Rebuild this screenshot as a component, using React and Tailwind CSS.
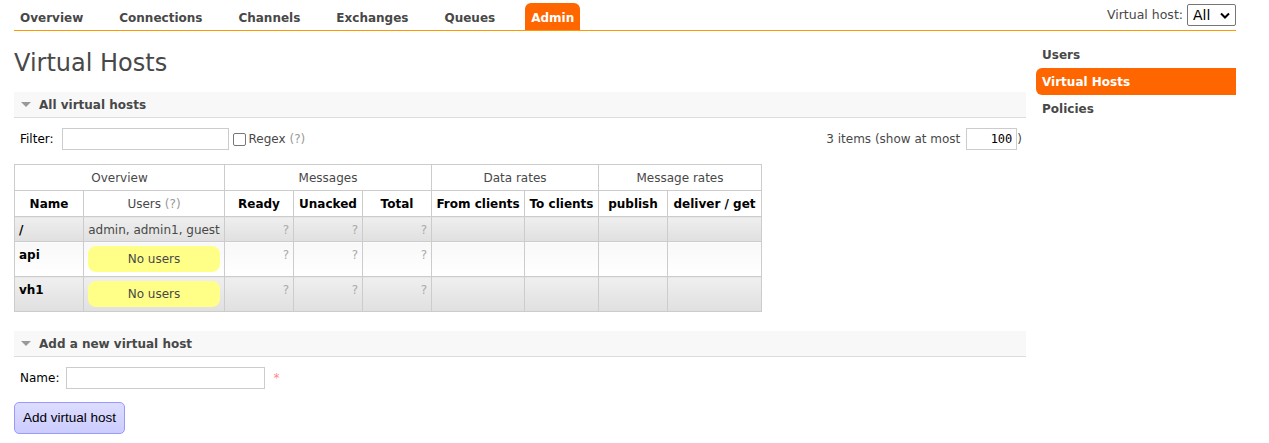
import React from 'react';

const navItems = ['Overview', 'Connections', 'Channels', 'Exchanges', 'Queues', 'Admin'];

const Q = () => <span className="text-[#aaa]">?</span>;

const SectionHead = ({ title }) => (
  <div className="flex items-center h-[26px] bg-[#f8f8f8] border-b border-[#ddd] px-[6px]">
    <svg width="12" height="8" viewBox="0 0 12 8" className="mr-[7px]">
      <path d="M1 1 L11 1 L6 6 Z" fill="#999" />
    </svg>
    <span className="font-bold text-[#484848] text-[12px]">{title}</span>
  </div>
);

const rows = [
  { name: '/', users: 'admin, admin1, guest', h: 'h-[25px]', odd: true },
  { name: 'api', users: null, h: 'h-[35px]', odd: false },
  { name: 'vh1', users: null, h: 'h-[35px]', odd: true },
];

const App = () => {
  return (
    <div className="ml-[14px] w-[1222px] text-[12px] text-[#484848]" style={{ fontFamily: '"DejaVu Sans", Verdana, sans-serif' }}>
      {/* top nav */}
      <div className="flex items-end justify-between h-[31px] border-b border-[#f90]">
        <ul className="flex items-end">
          {navItems.map((item) => (
            <li
              key={item}
              className={
                item === 'Admin'
                  ? 'mr-[24px] h-[27px] px-[6px] pt-[6px] rounded-t-[6px] bg-[#f60] text-white font-bold text-[12px]'
                  : 'mr-[24px] h-[27px] px-[6px] pt-[6px] font-bold text-[12px] text-[#484848]'
              }
            >
              {item}
            </li>
          ))}
        </ul>
        <div className="flex items-center self-start pt-[4px] text-[12.5px] text-[#484848]">
          <span className="mr-[4px]">Virtual host:</span>
          <div className="flex items-center justify-between w-[49px] h-[22px] border border-[#767676] rounded-[2px] px-[5px] text-black text-[14px]">
            <span>All</span>
            <svg width="10" height="7" viewBox="0 0 10 7">
              <path d="M1 1.5 L5 5.5 L9 1.5" stroke="#000" strokeWidth="2" fill="none" />
            </svg>
          </div>
        </div>
      </div>

      <div className="flex">
        {/* main */}
        <div className="w-[1012px]">
          <h1 className="mt-[16px] text-[24px] leading-[32px] text-[#484848]">Virtual Hosts</h1>

          <div className="mt-[13px]">
            <SectionHead title="All virtual hosts" />
          </div>

          <div className="flex items-center justify-between h-[22px] mt-[10px] px-[6px]">
            <div className="flex items-center">
              <span className="mr-[8px] text-black">Filter:</span>
              <div className="w-[167px] h-[22px] border border-[#ccc] bg-white" />
              <div className="ml-[4px] w-[13px] h-[13px] border border-[#767676] rounded-[2px] bg-white" />
              <span className="ml-[3px] text-[#484848]">Regex <span className="text-[#999]">(?)</span></span>
            </div>
            <div className="flex items-center -mr-[2px]">
              <span>3 items (show at most</span>
              <div className="ml-[6px] w-[51px] h-[22px] border border-[#ccc] bg-white flex items-center justify-end pr-[4px] text-black" style={{ fontFamily: '"DejaVu Sans Mono", monospace' }}>
                100
              </div>
              <span>)</span>
            </div>
          </div>

          <table className="mt-[14px] border-collapse text-[12px] text-black">
            <thead>
              <tr className="h-[26px]">
                <th colSpan={2} className="border border-[#ccc] font-normal text-[#484848]">Overview</th>
                <th colSpan={3} className="border border-[#ccc] font-normal text-[#484848]">Messages</th>
                <th colSpan={2} className="border border-[#ccc] font-normal text-[#484848]">Data rates</th>
                <th colSpan={2} className="border border-[#ccc] font-normal text-[#484848]">Message rates</th>
              </tr>
              <tr className="h-[26px]">
                <th className="border border-[#ccc] w-[69px]">Name</th>
                <th className="border border-[#ccc] w-[141px] font-normal text-[#484848]">Users <span className="text-[#999]">(?)</span></th>
                <th className="border border-[#ccc] w-[69px]">Ready</th>
                <th className="border border-[#ccc] w-[69px]">Unacked</th>
                <th className="border border-[#ccc] w-[69px]">Total</th>
                <th className="border border-[#ccc] w-[93px] whitespace-nowrap">From clients</th>
                <th className="border border-[#ccc] w-[74px] whitespace-nowrap">To clients</th>
                <th className="border border-[#ccc] w-[69px]">publish</th>
                <th className="border border-[#ccc] w-[94px] whitespace-nowrap">deliver / get</th>
              </tr>
            </thead>
            <tbody>
              {rows.map((r) => {
                const bg = r.odd
                  ? 'bg-linear-to-b from-[#efefef] to-[#e0e0e0]'
                  : 'bg-linear-to-b from-[#f8f8f8] to-[#ffffff]';
                const cell = `border border-[#ccc] align-top ${bg}`;
                return (
                  <tr key={r.name} className={r.h}>
                    <td className={`${cell} px-[4px] pt-[4px] font-bold`}>{r.name}</td>
                    <td className={`${cell} px-[4px] ${r.users ? 'pt-[4px] text-center text-[#484848] whitespace-nowrap' : 'pt-[4px]'}`}>
                      {r.users ? (
                        r.users
                      ) : (
                        <div className="h-[26px] rounded-[8px] bg-[#ffff88] text-[#484848] flex items-center justify-center">
                          No users
                        </div>
                      )}
                    </td>
                    <td className={`${cell} px-[4px] pt-[4px] text-right`}><Q /></td>
                    <td className={`${cell} px-[4px] pt-[4px] text-right`}><Q /></td>
                    <td className={`${cell} px-[4px] pt-[4px] text-right`}><Q /></td>
                    <td className={cell}></td>
                    <td className={cell}></td>
                    <td className={cell}></td>
                    <td className={cell}></td>
                  </tr>
                );
              })}
            </tbody>
          </table>

          <div className="mt-[19px]">
            <SectionHead title="Add a new virtual host" />
          </div>

          <div className="flex items-center h-[22px] mt-[10px] px-[6px]">
            <span className="mr-[7px] text-black">Name:</span>
            <div className="w-[199px] h-[22px] border border-[#ccc] bg-white" />
            <span className="ml-[8px] text-[#f88]">*</span>
          </div>

          <button
            className="block mt-[13px] h-[32px] px-[8px] rounded-[5px] border border-[#99f] bg-linear-to-b from-[#ddf] to-[#ccf] text-black text-[13.5px]"
            style={{ fontFamily: '"Liberation Sans", Arial, sans-serif' }}
          >
            Add virtual host
          </button>
        </div>

        {/* sidebar */}
        <div className="ml-[10px] w-[200px] pt-[10px]">
          <div className="h-[27px] px-[6px] flex items-center font-bold text-[12px] text-[#484848]">Users</div>
          <div className="h-[27px] px-[6px] flex items-center font-bold text-[12px] text-white bg-[#f60] rounded-l-[6px]">Virtual Hosts</div>
          <div className="h-[27px] px-[6px] flex items-center font-bold text-[12px] text-[#484848]">Policies</div>
        </div>
      </div>
    </div>
  );
};

export default App;
